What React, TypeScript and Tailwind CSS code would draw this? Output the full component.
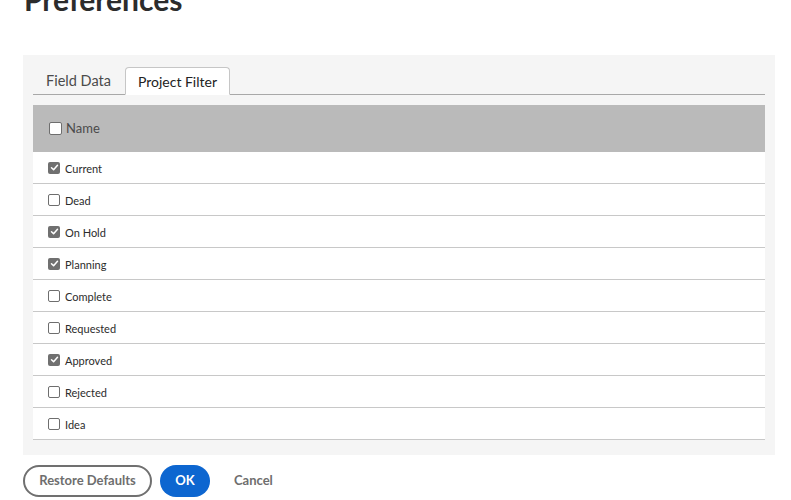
import { useState } from 'react'

const statuses = [
  { name: 'Current', checked: true },
  { name: 'Dead', checked: false },
  { name: 'On Hold', checked: true },
  { name: 'Planning', checked: true },
  { name: 'Complete', checked: false },
  { name: 'Requested', checked: false },
  { name: 'Approved', checked: true },
  { name: 'Rejected', checked: false },
  { name: 'Idea', checked: false },
]

function Box({ checked, size = 'sm' }: { checked: boolean; size?: 'sm' | 'md' }) {
  const dim = size === 'md' ? 'w-[13px] h-[13px]' : 'w-[12px] h-[12px]'
  if (checked) {
    return (
      <span className={`${dim} shrink-0 rounded-[2px] bg-[#707070] flex items-center justify-center`}>
        <svg viewBox="0 0 12 12" className="w-[9px] h-[9px]">
          <path d="M2 6.3 L4.8 9 L10 3" fill="none" stroke="#fff" strokeWidth="2" strokeLinecap="round" strokeLinejoin="round" />
        </svg>
      </span>
    )
  }
  return <span className={`${dim} shrink-0 rounded-[2px] border border-[#6e6e6e] bg-white`} />
}

export default function App() {
  const [rows, setRows] = useState(statuses)
  const toggle = (i: number) =>
    setRows(rows.map((r, j) => (j === i ? { ...r, checked: !r.checked } : r)))

  return (
    <div className="w-[791px] h-[500px] overflow-hidden bg-white" style={{ fontFamily: 'Lato, "Noto Sans", sans-serif' }}>
      <h1 className="ml-[24px] -mt-[16px] text-[30px] leading-none font-bold text-[#2c2c2c]">Preferences</h1>

      <div className="ml-[23px] w-[752px] mt-[41px] bg-[#f5f5f5] px-[10px] pt-[12px] pb-[15px]">
        <div className="flex items-end border-b border-[#a8a8a8]">
          <div className="pl-[13px] pr-[14px] h-[27px] flex items-center text-[14.5px] text-[#4b4b4b]">Field Data</div>
          <div className="-mb-px px-[12px] h-[28px] flex items-center text-[14px] text-[#222] bg-white border border-[#c6c6c6] border-b-white rounded-t-[4px]">
            Project Filter
          </div>
        </div>

        <div className="mt-[10px] bg-white">
          <div className="h-[47px] bg-[#bababa] flex items-center gap-[4px] pl-[16px]">
            <Box checked={false} size="md" />
            <span className="text-[13px] text-[#4b4b4b]">Name</span>
          </div>
          {rows.map((r, i) => (
            <div
              key={r.name}
              onClick={() => toggle(i)}
              className="h-[32px] border-b border-[#c8c8c8] flex items-center gap-[5px] pl-[15px] cursor-pointer"
            >
              <Box checked={r.checked} />
              <span className="text-[11px] text-[#2c2c2c] mt-[3px]">{r.name}</span>
            </div>
          ))}
        </div>
      </div>

      <div className="ml-[23px] mt-[10px] flex items-center">
        <button className="h-[32px] w-[129px] rounded-full border-2 border-[#707070] text-[13px] font-bold text-[#6e6e6e]">
          Restore Defaults
        </button>
        <button className="ml-[8px] h-[32px] w-[50px] rounded-full bg-[#0d66d0] text-[13px] font-bold text-white">
          OK
        </button>
        <button className="ml-[24px] text-[13px] font-bold text-[#6e6e6e]">Cancel</button>
      </div>
    </div>
  )
}
